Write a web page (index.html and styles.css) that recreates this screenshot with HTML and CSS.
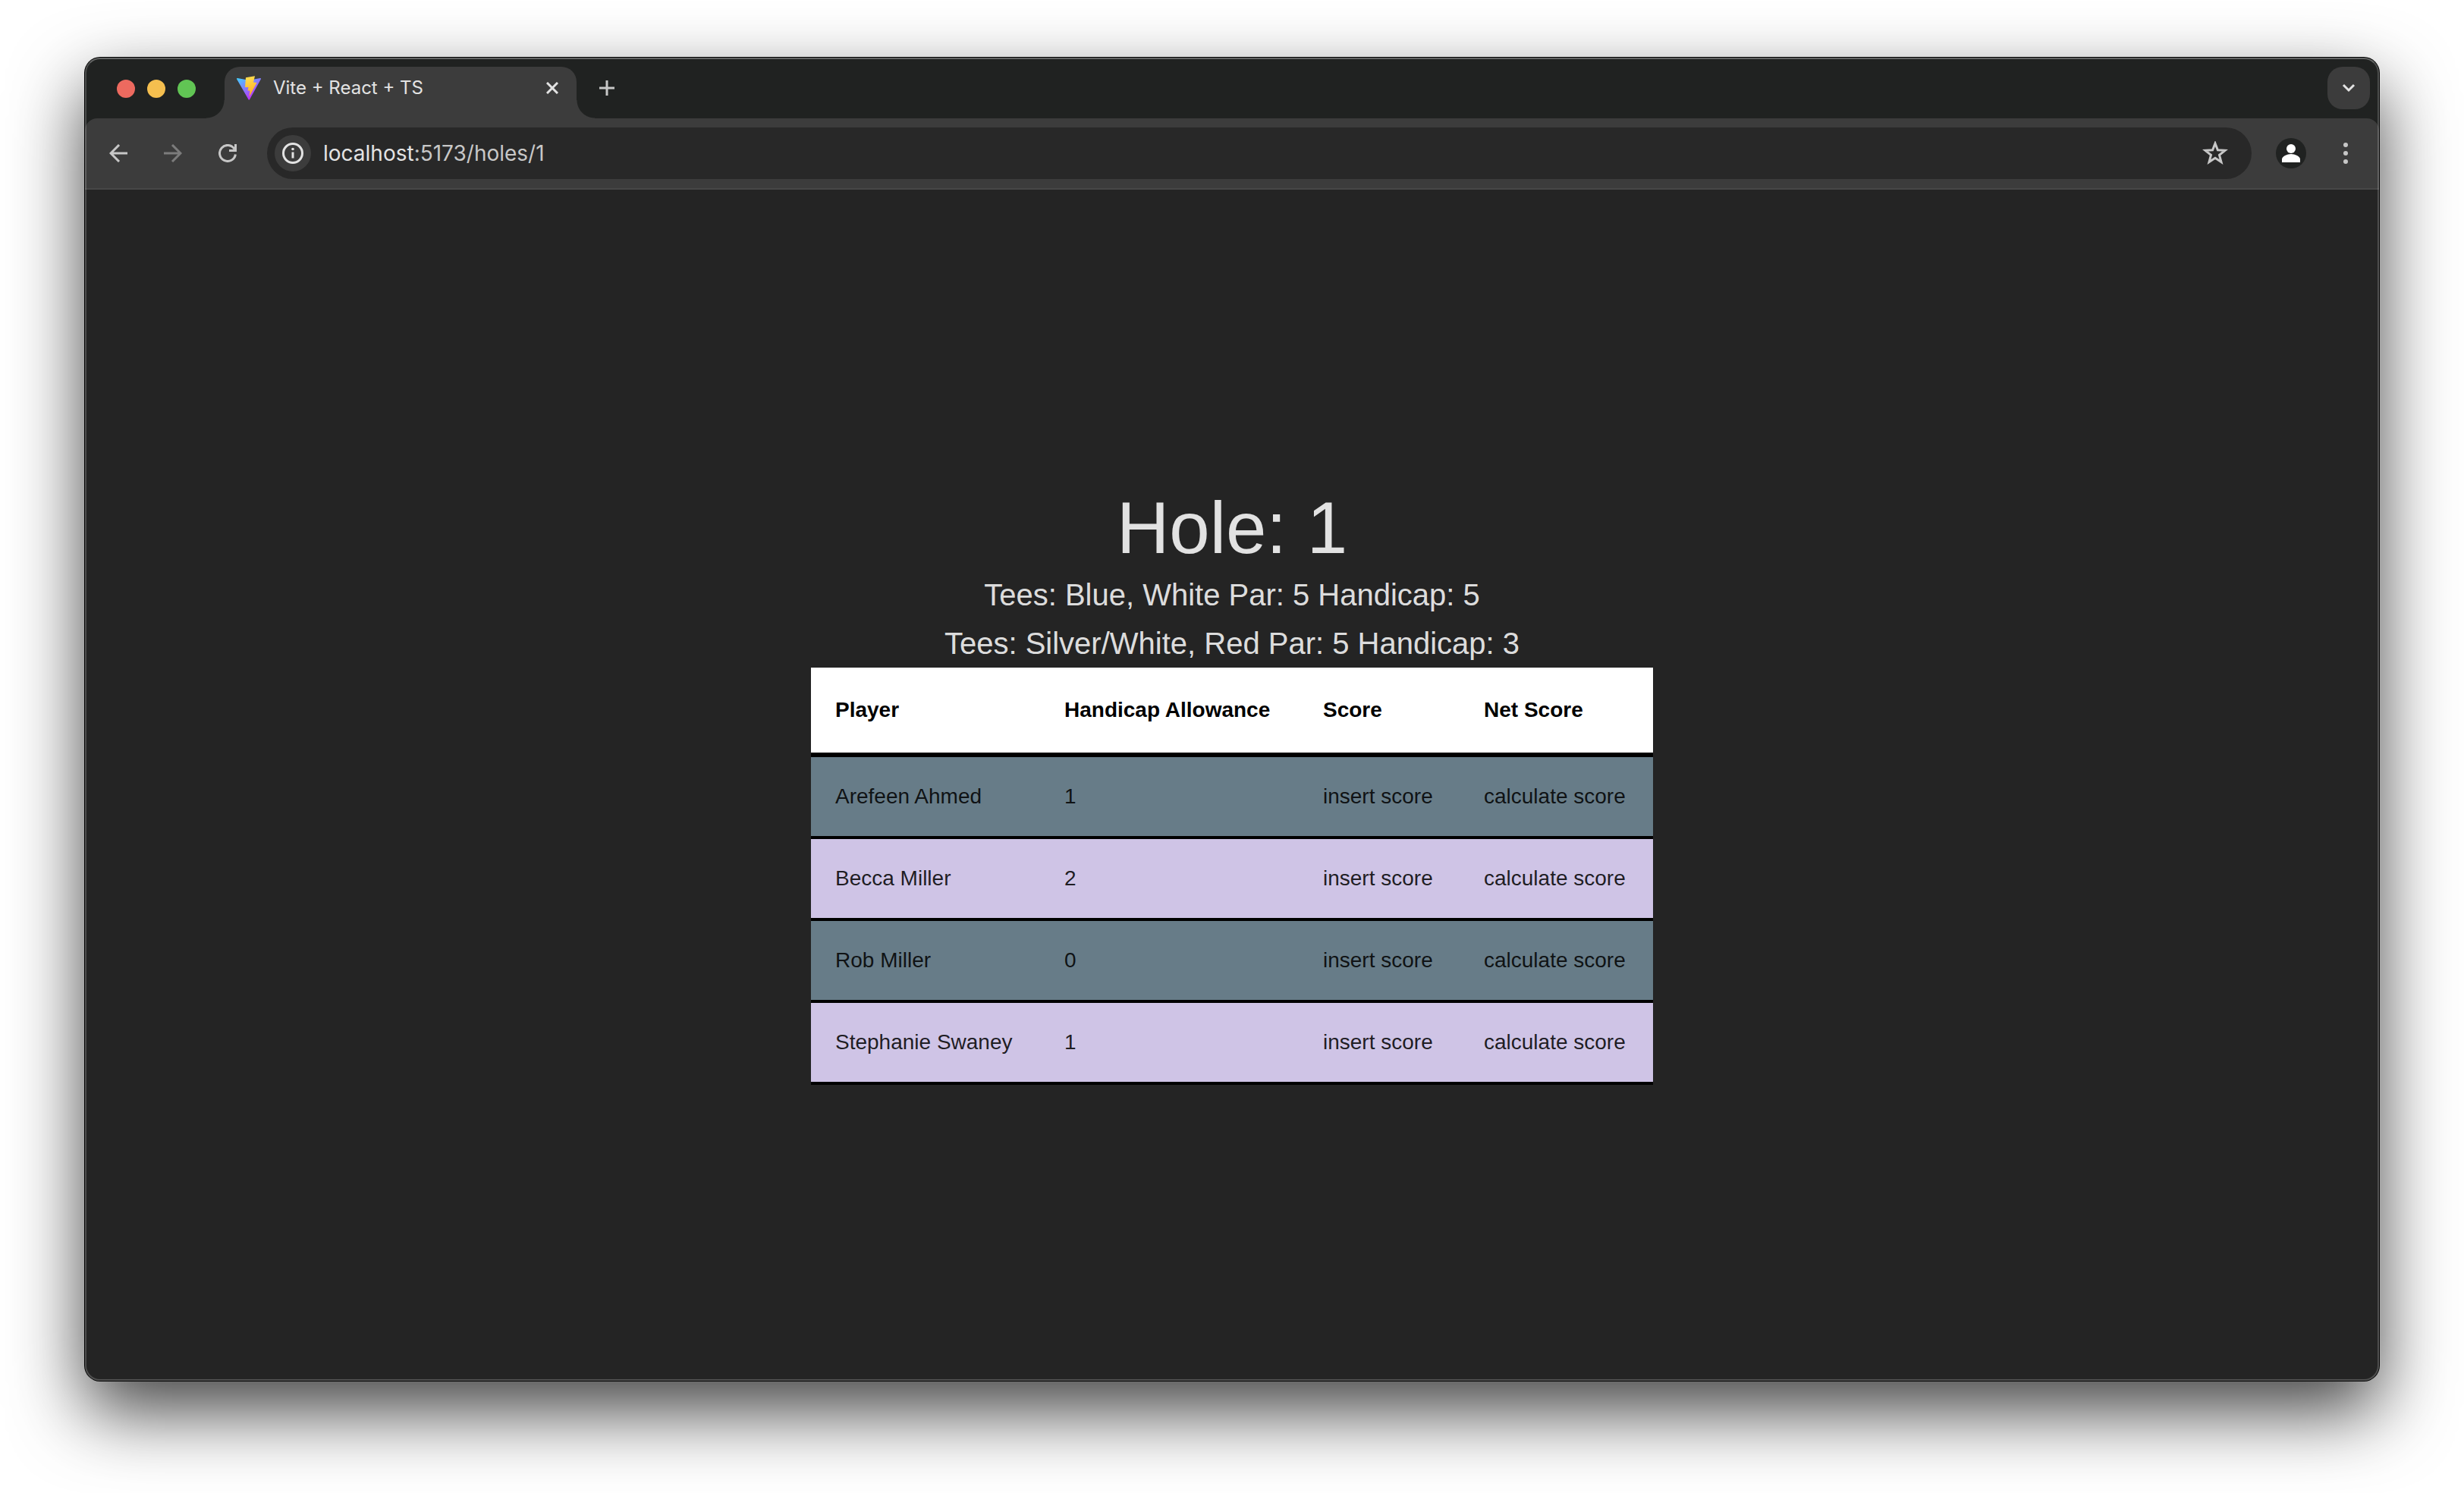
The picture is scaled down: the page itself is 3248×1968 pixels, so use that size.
FILE: index.html
```
<!DOCTYPE html>
<html lang="en">
<head>
<meta charset="utf-8">
<title>Vite + React + TS</title>
<link rel="stylesheet" href="styles.css">
</head>
<body>
<div class="window">
  <header class="tab-strip">
    <div class="lights">
      <button class="light light-close" aria-label="Close window"></button>
      <button class="light light-min" aria-label="Minimize window"></button>
      <button class="light light-max" aria-label="Zoom window"></button>
    </div>
    <div class="tab">
      <svg class="favicon" viewBox="0 0 32 32" aria-hidden="true">
        <defs>
          <linearGradient id="shield" x1="0" y1="0" x2="0.6" y2="0.9">
            <stop offset="0" stop-color="#41d1ff"/>
            <stop offset="1" stop-color="#bd34fe"/>
          </linearGradient>
          <linearGradient id="bolt" x1="0.4" y1="0" x2="0.6" y2="1">
            <stop offset="0" stop-color="#ffdf50"/>
            <stop offset="1" stop-color="#ffa820"/>
          </linearGradient>
        </defs>
        <path fill="url(#shield)" d="M31.900 4.200 17 31.300c-.3.600-1.100.600-1.400 0L.1 4.200c-.3-.6.2-1.300.9-1.200l15 2.700h.3L31 3c.7-.1 1.200.6.900 1.200z"/>
        <path fill="url(#bolt)" d="M24 .3 12 2.200 11 15h4.500l-1 4.500h3l-1 8L26.500 9l-4.500-.5z"/>
      </svg>
      <span class="tab-title">Vite + React + TS</span>
      <button class="icon-button tab-close" aria-label="Close tab">
        <svg viewBox="0 0 16 16" width="16" height="16"><path d="M1 1l14 14M15 1 1 15" stroke="#e3e3e3" stroke-width="3"/></svg>
      </button>
    </div>
    <button class="icon-button new-tab" aria-label="New tab">
      <svg viewBox="0 0 20 20" width="20" height="20"><path d="M10 0v20M0 10h20" stroke="#c7c7c7" stroke-width="3"/></svg>
    </button>
    <button class="icon-button tab-search" aria-label="Search tabs">
      <svg viewBox="0 0 18 12" width="18" height="12"><path d="M2 2l7 7 7-7" fill="none" stroke="#e3e3e3" stroke-width="3"/></svg>
    </button>
  </header>

  <nav class="toolbar">
    <button class="icon-button" aria-label="Back">
      <svg viewBox="0 0 24 24" width="24" height="24"><path d="M24 12H2M13 1 2 12l11 11" fill="none" stroke="#c7c7c7" stroke-width="3"/></svg>
    </button>
    <button class="icon-button" aria-label="Forward">
      <svg viewBox="0 0 24 24" width="24" height="24"><path d="M0 12h22M11 1l11 11-11 11" fill="none" stroke="#7c7c7c" stroke-width="3"/></svg>
    </button>
    <button class="icon-button" aria-label="Reload">
      <svg viewBox="0 0 24 24" width="24" height="24"><path d="M22.400 13.500A10.500 10.500 0 1 1 21 6.500" fill="none" stroke="#c7c7c7" stroke-width="3"/><path d="M22.500 0v8.500H14" fill="none" stroke="#c7c7c7" stroke-width="3"/></svg>
    </button>
    <div class="omnibox">
      <button class="icon-button site-info" aria-label="View site information">
        <svg viewBox="0 0 28 28" width="28" height="28"><circle cx="14" cy="14" r="12.500" fill="none" stroke="#e3e3e3" stroke-width="3"/><path d="M14 12.500v8" stroke="#e3e3e3" stroke-width="3"/><circle cx="14" cy="8.500" r="1.800" fill="#e3e3e3"/></svg>
      </button>
      <a class="url" href="#"><span class="host">localhost</span>:5173/holes/1</a>
      <button class="icon-button star" aria-label="Bookmark this tab">
        <svg viewBox="0 0 34 32" width="34" height="32"><path d="M17 3l3.400 8.700 9.600.600-7.500 6 2.500 9.200-8-5.200-8 5.200 2.500-9.200-7.500-6 9.600-.6z" fill="none" stroke="#c7c7c7" stroke-width="3"/></svg>
      </button>
    </div>
    <button class="icon-button avatar" aria-label="Profile">
      <svg viewBox="0 0 40 40" width="40" height="40"><circle cx="20" cy="20" r="20" fill="#202221"/><circle cx="20" cy="14" r="6" fill="#fff"/><path d="M8 32v-4c0-4 7-7 12-7s12 3 12 7v4z" fill="#fff"/></svg>
    </button>
    <button class="icon-button menu" aria-label="Menu">
      <svg viewBox="0 0 6 28" width="6" height="28"><g fill="#c7c7c7"><circle cx="3" cy="3" r="3"/><circle cx="3" cy="14" r="3"/><circle cx="3" cy="25" r="3"/></g></svg>
    </button>
  </nav>

  <main class="page">
    <h1 class="hole">Hole: 1</h1>
    <p class="tees">Tees: Blue, White Par: 5 Handicap: 5</p>
    <p class="tees">Tees: Silver/White, Red Par: 5 Handicap: 3</p>
    <table class="scores">
      <colgroup>
        <col class="col-player">
        <col class="col-allowance">
        <col class="col-score">
        <col class="col-net">
      </colgroup>
      <thead>
        <tr><th>Player</th><th>Handicap Allowance</th><th>Score</th><th>Net Score</th></tr>
      </thead>
      <tbody>
        <tr><td>Arefeen Ahmed</td><td>1</td><td>insert score</td><td>calculate score</td></tr>
        <tr><td>Becca Miller</td><td>2</td><td>insert score</td><td>calculate score</td></tr>
        <tr><td>Rob Miller</td><td>0</td><td>insert score</td><td>calculate score</td></tr>
        <tr><td>Stephanie Swaney</td><td>1</td><td>insert score</td><td>calculate score</td></tr>
      </tbody>
    </table>
  </main>
</div>
</body>
</html>
```
FILE: styles.css
```
* {
  box-sizing: border-box;
}

body {
  margin: 0;
  min-height: 100vh;
  padding: 76px 112px 148px;
  display: flex;
  background: #fff;
  font-family: "Liberation Sans", Arial, sans-serif;
}

.window {
  flex: 1;
  position: relative;
  display: flex;
  flex-direction: column;
  border-radius: 20px;
  background: #202221;
  box-shadow: 0 0 0 1px #000, 0 40px 96px rgba(0, 0, 0, 0.74);
}

/* light rim drawn over the window's edge */
.window::after {
  content: "";
  position: absolute;
  inset: 0;
  border: 2px solid rgba(255, 255, 255, 0.2);
  border-top-color: rgba(255, 255, 255, 0.3);
  border-radius: 20px;
  pointer-events: none;
}

.icon-button {
  display: flex;
  align-items: center;
  justify-content: center;
  flex: none;
  width: 48px;
  height: 48px;
  padding: 0;
  border: 0;
  border-radius: 50%;
  background: none;
}

/* Tab strip */

.tab-strip {
  display: flex;
  align-items: flex-start;
  height: 80px;
  padding: 12px 12px 0 42px;
}

.lights {
  display: flex;
  gap: 16px;
  padding-top: 17px;
  margin-right: 38px;
}

.light {
  width: 24px;
  height: 24px;
  padding: 0;
  border: 0;
  border-radius: 50%;
}

.light-close { background: #ed6a5f; }
.light-min { background: #f5bf4f; }
.light-max { background: #61c554; }

.tab {
  position: relative;
  display: flex;
  align-items: center;
  width: 464px;
  height: 68px;
  padding: 0 8px 12px 16px;
  border-radius: 20px 20px 0 0;
  background: #3c3c3c;
}

/* curved feet joining the tab to the toolbar */
.tab::before,
.tab::after {
  content: "";
  position: absolute;
  bottom: 0;
  width: 24px;
  height: 24px;
}

.tab::before {
  right: 100%;
  background: radial-gradient(circle at 0 0, transparent 23px, #3c3c3c 24px);
}

.tab::after {
  left: 100%;
  background: radial-gradient(circle at 100% 0, transparent 23px, #3c3c3c 24px);
}

.favicon {
  width: 32px;
  height: 32px;
}

.tab-title {
  flex: 1;
  margin-left: 16px;
  color: #e3e3e3;
  font-family: Inter, sans-serif;
  font-size: 24px;
  line-height: 32px;
}

.new-tab {
  margin: 4px 0 0 16px;
}

.tab-search {
  width: 56px;
  height: 56px;
  margin-left: auto;
  border-radius: 20px;
  background: #3c3c3c;
}

/* Toolbar */

.toolbar {
  display: flex;
  align-items: center;
  gap: 24px;
  height: 94px;
  padding: 0 20px;
  border-bottom: 2px solid #474747;
  border-radius: 16px 16px 0 0;
  background: #3c3c3c;
}

.omnibox {
  flex: 1;
  display: flex;
  align-items: center;
  height: 68px;
  margin-left: 4px;
  padding: 0 24px 0 10px;
  border-radius: 34px;
  background: #282828;
}

.site-info {
  background: #3c3c3c;
}

.url {
  margin-left: 16px;
  color: #c7c7c7;
  font-family: Inter, sans-serif;
  font-size: 28px;
  line-height: 32px;
  text-decoration: none;
}

.host {
  color: #e3e3e3;
}

.star {
  margin-left: auto;
}

.avatar {
  margin-left: 4px;
}

/* Page */

.page {
  flex: 1;
  display: flex;
  flex-direction: column;
  align-items: center;
  justify-content: center;
  border-radius: 0 0 20px 20px;
  background: #242424;
  color: rgba(255, 255, 255, 0.87);
}

.hole {
  margin: 0;
  font-size: 96px;
  font-weight: 400;
  line-height: 112px;
}

.tees {
  margin: 0;
  font-size: 40px;
  line-height: 64px;
}

.scores {
  border-spacing: 0;
  font-size: 28px;
  line-height: 40px;
  text-align: left;
  white-space: nowrap;
}

.col-player { width: 302px; }
.col-allowance { width: 341px; }
.col-score { width: 212px; }
.col-net { width: 255px; }

.scores th {
  padding: 36px 32px;
  border-bottom: 6px solid #000;
  background: #fff;
  color: #000;
}

.scores td {
  padding: 32px;
  border-bottom: 4px solid #000;
  background: #cfc4e6;
  color: rgba(0, 0, 0, 0.87);
}

.scores tbody tr:nth-child(odd) td {
  background: #677c88;
}
```
